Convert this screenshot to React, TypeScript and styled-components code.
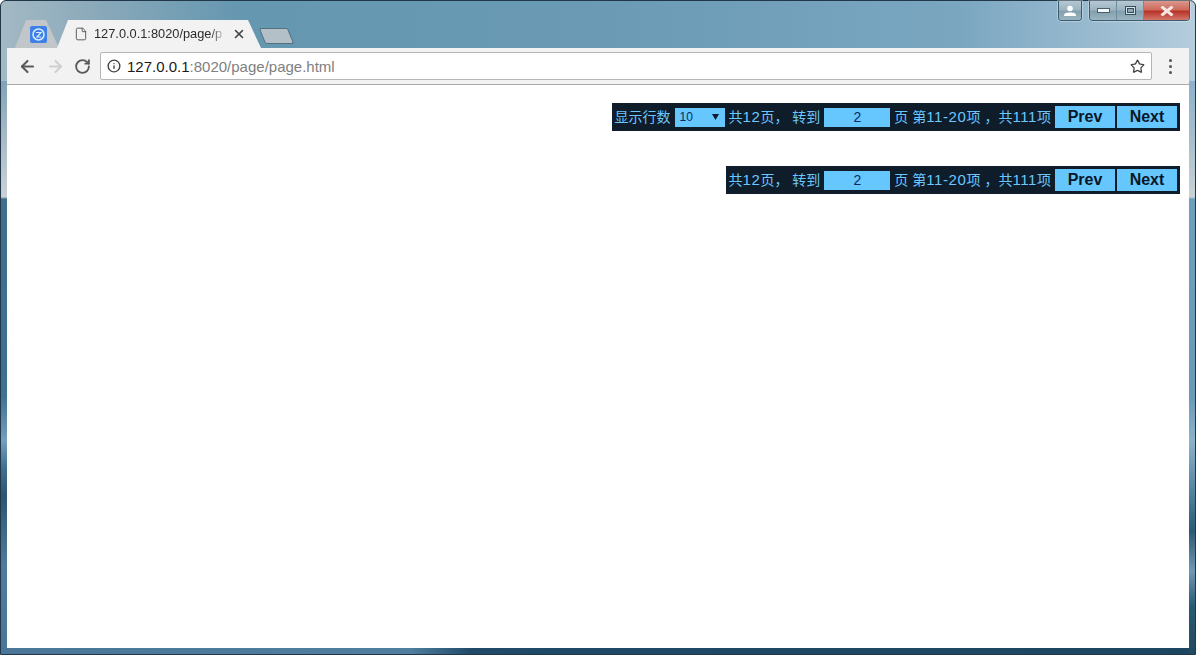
import React from 'react';
import styled, { createGlobalStyle } from 'styled-components';
import { ArrowLeft, ArrowRight, RotateCw, Info, Star, File, X } from 'lucide-react';

const GlobalStyle = createGlobalStyle`
  html, body {
    margin: 0;
    padding: 0;
    height: 100%;
    overflow: hidden;
    background: #fff;
  }
  * { box-sizing: border-box; }
`;

const Frame = styled.div`
  width: 1196px;
  height: 655px;
  display: flex;
  flex-direction: column;
  padding: 0 6px 6px 6px;
  border: 1px solid #22384a;
  border-radius: 6px 6px 0 0;
  font-family: 'Liberation Sans', Arial, sans-serif;
  background:
    linear-gradient(180deg, #7fa3b8 0, #a9bcc6 60px, #c9d2d6 116px, #3d6e8c 118px, #3f7191 315px, #72a0bd 360px, #3f7090 387px, #2c5572 415px, #4d7c9c 485px, #47769a 100%) 0 80px / 6px 575px no-repeat,
    linear-gradient(180deg, #8db2cc 0, #a8bfce 60px, #c9d2d6 116px, #6f9fbe 118px, #6a9aba 315px, #8cb2cc 360px, #4f7f9c 415px, #2c5a74 450px, #6f98b4 490px, #2a5a74 525px, #21495f 100%) right 80px / 6px 575px no-repeat,
    linear-gradient(90deg, #4a7799 0, #4f7e9e 410px, #1f4a68 470px, #1c4660 100%) 0 100% / 100% 6px no-repeat,
    linear-gradient(90deg, #a4b9c4 0, #8aa9ba 8%, #6597b0 20%, #6a9ab4 50%, #7aa6c0 80%, #9dbdd2 93%, #b5cddd 100%);
`;

const TitleBar = styled.div`
  height: 47px;
  margin-right: -6px;
  padding-right: 5px;
  display: flex;
  align-items: flex-end;
  justify-content: space-between;
`;

const TabStrip = styled.div`
  display: flex;
  align-items: flex-end;
  margin-left: 8px;
`;

const Tab = styled.div<{ $active?: boolean }>`
  height: 28px;
  width: ${p => (p.$active ? '204px' : '44px')};
  margin-right: ${p => (p.$active ? '0' : '-2px')};
  display: flex;
  align-items: center;
  background: ${p => (p.$active ? '#f2f2f2' : '#c0c6c9')};
  clip-path: polygon(0 100%, 11px 0, calc(100% - 13px) 0, 100% 100%);
  padding-left: ${p => (p.$active ? '17px' : '15px')};
`;

const TabTitle = styled.span`
  width: 132px;
  margin-left: 6px;
  padding-bottom: 1px;
  white-space: nowrap;
  font-size: 12.8px;
  color: #2b2b2b;
  -webkit-mask-image: linear-gradient(90deg, #000 88%, transparent 100%);
  mask-image: linear-gradient(90deg, #000 88%, transparent 100%);
`;

const TabClose = styled.span`
  display: flex;
  margin-left: 6px;
  color: #444;
`;

const NewTab = styled.div`
  width: 29px;
  height: 16px;
  margin: 0 0 4px 1px;
  background: #b4c0c8;
  border: 1px solid #54707f;
  transform: skewX(22deg);
  border-radius: 2px;
`;

const WindowControls = styled.div`
  align-self: flex-start;
  display: flex;
  gap: 7px;
`;

const ControlGroup = styled.div`
  height: 20px;
  display: flex;
  border: 1px solid #3c5a6c;
  border-top: 0;
  border-radius: 0 0 4px 4px;
  overflow: hidden;
  box-shadow: 0 0 0 1px rgba(255, 255, 255, 0.3);
`;

const ControlButton = styled.div<{ $width: number; $close?: boolean }>`
  width: ${p => p.$width}px;
  display: flex;
  align-items: center;
  justify-content: center;
  border-right: ${p => (p.$close ? '0' : '1px solid #6f8c9d')};
  background: ${p =>
    p.$close
      ? 'linear-gradient(180deg, #d9998c 0, #cf6a5c 45%, #b9342a 55%, #d2776b 100%)'
      : 'linear-gradient(180deg, #b4c8d3 0, #9db4c1 45%, #84a0ae 55%, #9ab4c1 100%)'};
  &:last-child { border-right: 0; }
`;

const Toolbar = styled.div`
  height: 37px;
  flex: none;
  display: flex;
  align-items: center;
  padding: 0 0 0 11px;
  background: #f2f2f2;
  border-bottom: 1px solid #a9a9a9;
`;

const NavIcon = styled.span<{ $muted?: boolean }>`
  width: 28px;
  display: flex;
  color: ${p => (p.$muted ? '#cfcfcf' : '#5a5a5a')};
`;

const Omnibox = styled.div`
  width: 1052px;
  height: 28px;
  margin-left: -2px;
  display: flex;
  align-items: center;
  padding: 0 6px;
  background: #fff;
  border: 1px solid #b5b5b5;
  border-radius: 2px;
  font-size: 15px;
  color: #808080;
`;

const Host = styled.span`
  margin-left: 6px;
  color: #1a1a1a;
`;

const StarIcon = styled.span`
  display: flex;
  margin-left: auto;
  color: #444;
`;

const MenuDots = styled.div`
  margin-left: 17px;
  display: flex;
  flex-direction: column;
  gap: 3px;
`;

const Dot = styled.span`
  width: 3px;
  height: 3px;
  border-radius: 50%;
  background: #555;
`;

const Content = styled.div`
  flex: 1;
  display: flex;
  flex-direction: column;
  align-items: flex-end;
  gap: 35px;
  padding: 18px 9px 0 0;
  background: #fff;
`;

const Pager = styled.div`
  height: 28px;
  display: flex;
  align-items: center;
  padding: 0 3px;
  background: #0f1c2a;
  font-family: 'Liberation Sans', 'Noto Sans CJK SC', sans-serif;
  font-size: 14px;
  color: #6ac8ff;
`;

const Label = styled.span`
  position: relative;
  top: -1px;
  white-space: nowrap;
  margin-right: 4px;
`;

const Num = styled.span`
  font-size: 15px;
  letter-spacing: 0.6px;
`;

const SelectWrap = styled.div`
  position: relative;
  width: 50px;
  height: 19px;
  margin-right: 4px;
`;

const RowSelect = styled.select`
  appearance: none;
  width: 100%;
  height: 100%;
  padding: 0 0 0 5px;
  border: 0;
  border-radius: 0;
  background: #66c7ff;
  color: #0d2a5c;
  font-family: 'Liberation Sans', sans-serif;
  font-size: 12px;
`;

const SelectArrow = styled.svg`
  position: absolute;
  right: 6px;
  top: 6px;
  width: 7px;
  height: 6px;
`;

const PageInput = styled.input`
  width: 66px;
  height: 19px;
  margin-right: 4px;
  padding: 0;
  border: 0;
  background: #66c7ff;
  color: #0d2a5c;
  text-align: center;
  font-family: 'Liberation Sans', sans-serif;
  font-size: 14px;
`;

const PageButton = styled.button`
  width: 60px;
  height: 22px;
  padding: 0;
  border: 0;
  background: #66c7ff;
  color: #0a1626;
  font-family: 'Liberation Sans', sans-serif;
  font-weight: bold;
  font-size: 16px;
  & + & { margin-left: 2px; }
`;

const PagerBar = ({ showSize }: { showSize?: boolean }) => (
  <Pager>
    {showSize && (
      <>
        <Label>显示行数</Label>
        <SelectWrap>
          <RowSelect defaultValue="10">
            <option>10</option>
            <option>20</option>
          </RowSelect>
          <SelectArrow viewBox="0 0 7 6">
            <path d="M0 0h7L3.5 6z" fill="#0d1b33" />
          </SelectArrow>
        </SelectWrap>
      </>
    )}
    <Label>共<Num>12</Num>页， 转到</Label>
    <PageInput defaultValue="2" />
    <Label>页 第<Num>11-20</Num>项 ，共<Num>111</Num>项</Label>
    <PageButton>Prev</PageButton>
    <PageButton>Next</PageButton>
  </Pager>
);

const Favicon = () => (
  <svg width="17" height="17" viewBox="0 0 17 17">
    <rect width="17" height="17" rx="2" fill="#3f80e8" />
    <circle cx="8.5" cy="8.5" r="5.5" fill="none" stroke="#d8ecff" strokeWidth="1.5" />
    <path d="M6 6.5h5L7 11h4" fill="none" stroke="#d8ecff" strokeWidth="1.2" />
  </svg>
);

const App = () => {
  return (
    <Frame>
      <GlobalStyle />
      <TitleBar>
        <TabStrip>
          <Tab>
            <Favicon />
          </Tab>
          <Tab $active>
            <File size={14} color="#555" strokeWidth={1.6} />
            <TabTitle>127.0.0.1:8020/page/p</TabTitle>
            <TabClose>
              <X size={14} strokeWidth={2.8} />
            </TabClose>
          </Tab>
          <NewTab />
        </TabStrip>
        <WindowControls>
          <ControlGroup>
            <ControlButton $width={22}>
              <svg width="12" height="11" viewBox="0 0 12 11">
                <circle cx="6" cy="3.5" r="2.8" fill="#fff" />
                <path d="M0 11c0-3 2-3.5 6-3.5s6 .5 6 3.5z" fill="#fff" />
              </svg>
            </ControlButton>
          </ControlGroup>
          <ControlGroup>
            <ControlButton $width={27}>
              <svg width="13" height="5" viewBox="0 0 13 5">
                <rect x=".5" y=".5" width="12" height="4" fill="#f4f8fa" stroke="#46606e" />
              </svg>
            </ControlButton>
            <ControlButton $width={27}>
              <svg width="11" height="9" viewBox="0 0 11 9">
                <rect x=".5" y=".5" width="10" height="8" fill="#d6e2e8" stroke="#34505f" />
                <rect x="2.5" y="2.5" width="6" height="4" fill="#8ea8b6" stroke="#34505f" />
              </svg>
            </ControlButton>
            <ControlButton $width={45} $close>
              <svg width="14" height="10" viewBox="0 0 14 10">
                <path d="M1.5 0.5L12.5 9.5M12.5 0.5L1.5 9.5" stroke="#f5e6e2" strokeWidth="3" />
              </svg>
            </ControlButton>
          </ControlGroup>
        </WindowControls>
      </TitleBar>
      <Toolbar>
        <NavIcon>
          <ArrowLeft size={19} strokeWidth={2.6} />
        </NavIcon>
        <NavIcon $muted>
          <ArrowRight size={19} strokeWidth={2.6} />
        </NavIcon>
        <NavIcon>
          <RotateCw size={17} strokeWidth={2.6} />
        </NavIcon>
        <Omnibox>
          <Info size={14} color="#444" strokeWidth={2.4} />
          <Host>127.0.0.1</Host>:8020/page/page.html
          <StarIcon>
            <Star size={15} strokeWidth={2.1} />
          </StarIcon>
        </Omnibox>
        <MenuDots>
          <Dot />
          <Dot />
          <Dot />
        </MenuDots>
      </Toolbar>
      <Content>
        <PagerBar showSize />
        <PagerBar />
      </Content>
    </Frame>
  );
};

export default App;
